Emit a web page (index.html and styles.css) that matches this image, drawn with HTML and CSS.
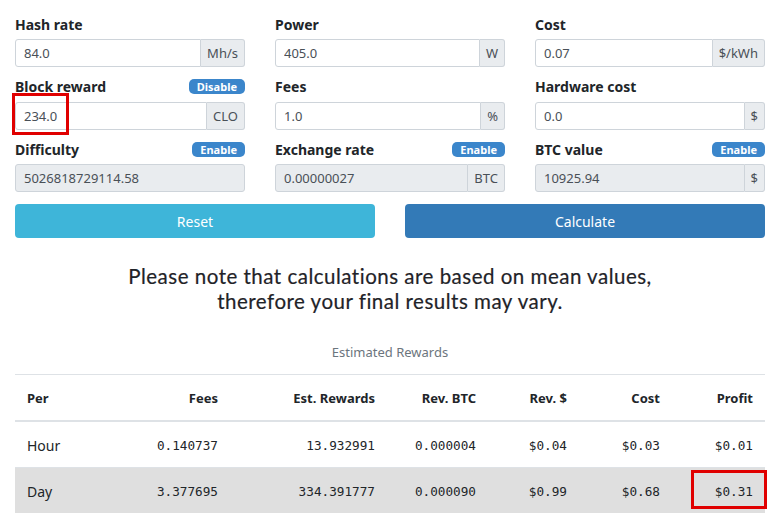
FILE: index.html
```html
<!DOCTYPE html>
<html lang="en">
<head>
  <meta charset="UTF-8">
  <meta name="viewport" content="width=device-width, initial-scale=1.0">
  <title>Mining Calculator</title>
  <link rel="stylesheet" href="styles.css">
</head>
<body>
  <div class="container">

    <div class="form-grid">
      <div class="form-group">
        <div class="label-row"><label>Hash rate</label></div>
        <div class="input-group">
          <input type="text" value="84.0">
          <span class="addon">Mh/s</span>
        </div>
      </div>
      <div class="form-group">
        <div class="label-row"><label>Power</label></div>
        <div class="input-group">
          <input type="text" value="405.0">
          <span class="addon">W</span>
        </div>
      </div>
      <div class="form-group">
        <div class="label-row"><label>Cost</label></div>
        <div class="input-group">
          <input type="text" value="0.07">
          <span class="addon">$/kWh</span>
        </div>
      </div>

      <div class="form-group">
        <div class="label-row"><label>Block reward</label><span class="badge">Disable</span></div>
        <div class="input-group marked">
          <input type="text" value="234.0">
          <span class="addon">CLO</span>
          <span class="mark mark-input"></span>
        </div>
      </div>
      <div class="form-group">
        <div class="label-row"><label>Fees</label></div>
        <div class="input-group">
          <input type="text" value="1.0">
          <span class="addon">%</span>
        </div>
      </div>
      <div class="form-group">
        <div class="label-row"><label>Hardware cost</label></div>
        <div class="input-group">
          <input type="text" value="0.0">
          <span class="addon">$</span>
        </div>
      </div>

      <div class="form-group">
        <div class="label-row"><label>Difficulty</label><span class="badge">Enable</span></div>
        <div class="input-group">
          <input type="text" value="5026818729114.58" disabled>
        </div>
      </div>
      <div class="form-group">
        <div class="label-row"><label>Exchange rate</label><span class="badge">Enable</span></div>
        <div class="input-group">
          <input type="text" value="0.00000027" disabled>
          <span class="addon">BTC</span>
        </div>
      </div>
      <div class="form-group">
        <div class="label-row"><label>BTC value</label><span class="badge">Enable</span></div>
        <div class="input-group">
          <input type="text" value="10925.94" disabled>
          <span class="addon">$</span>
        </div>
      </div>
    </div>

    <div class="button-row">
      <button class="btn btn-reset">Reset</button>
      <button class="btn btn-calc">Calculate</button>
    </div>

    <p class="note">Please note that calculations are based on mean values,<br>therefore your final results may vary.</p>

    <table class="rewards">
      <caption>Estimated Rewards</caption>
      <colgroup>
        <col style="width: 100px">
        <col style="width: 115px">
        <col style="width: 157px">
        <col style="width: 101px">
        <col style="width: 91px">
        <col style="width: 93px">
        <col style="width: 93px">
      </colgroup>
      <thead>
        <tr>
          <th class="left">Per</th>
          <th>Fees</th>
          <th>Est. Rewards</th>
          <th>Rev. BTC</th>
          <th>Rev. $</th>
          <th>Cost</th>
          <th>Profit</th>
        </tr>
      </thead>
      <tbody>
        <tr>
          <td class="left">Hour</td>
          <td>0.140737</td>
          <td>13.932991</td>
          <td>0.000004</td>
          <td>$0.04</td>
          <td>$0.03</td>
          <td>$0.01</td>
        </tr>
        <tr class="active">
          <td class="left">Day</td>
          <td>3.377695</td>
          <td>334.391777</td>
          <td>0.000090</td>
          <td>$0.99</td>
          <td>$0.68</td>
          <td class="marked">$0.31<span class="mark mark-cell"></span></td>
        </tr>
      </tbody>
    </table>

  </div>
</body>
</html>
```

FILE: styles.css
```css
body {
  margin: 0;
  font-family: "Noto Sans", "Open Sans", sans-serif;
  font-size: 14px;
  color: #212529;
  background: #fff;
}
.container {
  width: 750px;
  margin-left: 15px;
  padding-top: 13px;
}
.form-grid {
  display: grid;
  grid-template-columns: repeat(3, 230px);
  column-gap: 30px;
  row-gap: 8.5px;
}
.label-row {
  display: flex;
  justify-content: space-between;
  align-items: center;
  height: 22px;
  margin-bottom: 4px;
}
label {
  font-weight: bold;
  font-size: 14px;
}
.badge {
  background-color: #3b86cb;
  color: #fff;
  font-size: 11px;
  font-weight: bold;
  padding: 0 8px;
  height: 15px;
  line-height: 15px;
  border-radius: 5px;
}
.input-group {
  display: flex;
  height: 28px;
}
.input-group input {
  flex: 1;
  min-width: 0;
  border: 1px solid #ced4da;
  border-radius: 3px;
  padding: 0 8px;
  font-family: inherit;
  font-size: 13px;
  color: #495057;
  background: #fff;
}
.input-group input:not(:last-child) {
  border-top-right-radius: 0;
  border-bottom-right-radius: 0;
}
.input-group input:disabled {
  background-color: #e9ecef;
  color: #495057;
}
.addon {
  display: flex;
  align-items: center;
  padding: 0 6px;
  font-size: 13px;
  color: #495057;
  background-color: #e9ecef;
  border: 1px solid #ced4da;
  border-left: none;
  border-radius: 0 3px 3px 0;
}
.marked {
  position: relative;
}
.mark {
  position: absolute;
  border: 3px solid #e00000;
  pointer-events: none;
}
.mark-input {
  left: -3px;
  top: -9px;
  width: 51px;
  height: 36px;
}
.button-row {
  display: grid;
  grid-template-columns: 360px 360px;
  column-gap: 30px;
  margin-top: 12px;
}
.btn {
  height: 34px;
  border: none;
  border-radius: 4px;
  color: #fff;
  font-family: inherit;
  font-size: 14px;
  cursor: pointer;
}
.btn-reset {
  background-color: #3eb5d9;
}
.btn-calc {
  background-color: #337ab7;
}
.note {
  text-align: center;
  font-family: Lato, "Noto Sans", sans-serif;
  font-size: 20.5px;
  line-height: 25px;
  letter-spacing: 0.5px;
  margin: 26px 0 20px;
  color: #1f2328;
  -webkit-text-stroke: 0.2px #1f2328;
}
.rewards {
  width: 750px;
  border-collapse: collapse;
  table-layout: fixed;
}
.rewards caption {
  caption-side: top;
  color: #6c757d;
  font-size: 13px;
  padding: 9px 0 13px;
}
.rewards th,
.rewards td {
  text-align: right;
  padding: 12px;
  line-height: 21px;
  border-top: 1px solid #dee2e6;
}
.rewards th {
  font-size: 13px;
  font-weight: bold;
  border-bottom: 2px solid #dee2e6;
}
.rewards thead th {
  padding-top: 13px;
  padding-bottom: 11px;
}
.rewards td {
  font-family: "DejaVu Sans Mono", monospace;
  font-size: 12.7px;
  padding-top: 13px;
  padding-bottom: 11px;
}
.rewards .left {
  text-align: left;
}
.rewards td.left {
  font-family: "Noto Sans", sans-serif;
  font-size: 14px;
}
.rewards tr.active td {
  background-color: #dfdfdf;
}
.mark-cell {
  left: 19px;
  top: 2px;
  width: 70px;
  height: 33px;
}
```
